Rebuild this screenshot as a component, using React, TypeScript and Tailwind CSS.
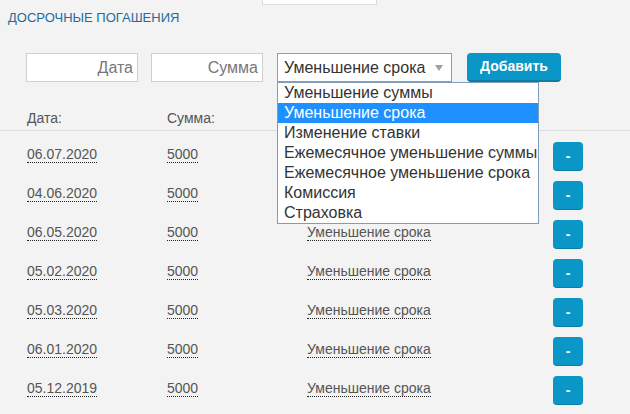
const rows = [
  { date: "06.07.2020", sum: "5000", type: "Уменьшение срока" },
  { date: "04.06.2020", sum: "5000", type: "Уменьшение срока" },
  { date: "06.05.2020", sum: "5000", type: "Уменьшение срока" },
  { date: "05.02.2020", sum: "5000", type: "Уменьшение срока" },
  { date: "05.03.2020", sum: "5000", type: "Уменьшение срока" },
  { date: "06.01.2020", sum: "5000", type: "Уменьшение срока" },
  { date: "05.12.2019", sum: "5000", type: "Уменьшение срока" },
];

const options = [
  "Уменьшение суммы",
  "Уменьшение срока",
  "Изменение ставки",
  "Ежемесячное уменьшение суммы",
  "Ежемесячное уменьшение срока",
  "Комиссия",
  "Страховка",
];

function Dotted({ children }: { children: React.ReactNode }) {
  return (
    <span className="inline-block leading-[16px] border-b border-dotted border-[#222]">
      {children}
    </span>
  );
}

export default function App() {
  return (
    <div className="h-[414px] w-[630px] overflow-hidden bg-[#f3f3f3] font-['Liberation_Sans',Arial,sans-serif] text-[#555]">
      {/* tail of the block above */}
      <div className="ml-[262px] h-[5px] w-[115px] border-x border-b border-[#dcdcdc] bg-white" />

      <div className="ml-[8px] mt-[5px] text-[13px] leading-[16px] text-[#1d6c9c]">
        ДОСРОЧНЫЕ ПОГАШЕНИЯ
      </div>

      {/* add form */}
      <div className="ml-[26px] mt-[27px] flex items-start">
        <input
          placeholder="Дата"
          className="h-[29px] w-[112px] border border-[#cfcfcf] bg-white pr-[4px] text-right text-[16px] placeholder:text-[#777] outline-none"
        />
        <input
          placeholder="Сумма"
          className="ml-[13px] h-[29px] w-[112px] border border-[#cfcfcf] bg-white pr-[4px] text-right text-[16px] placeholder:text-[#777] outline-none"
        />
        <div className="relative ml-[14px]">
          <div className="flex h-[29px] w-[175px] items-center justify-between border border-[#7f9ed3] bg-white pl-[6px] pr-[8px] text-[16px] text-[#333]">
            <span>Уменьшение срока</span>
            <span className="h-0 w-0 border-x-[4px] border-t-[6px] border-x-transparent border-t-[#a0a0a0]" />
          </div>
          <ul className="absolute left-0 top-[29px] z-10 w-[262px] border border-[#7f9db9] bg-white text-[16px] leading-[20px] text-[#333]">
            {options.map((o, i) => (
              <li
                key={o}
                className={
                  i === 1
                    ? "h-[20px] bg-[#1e90ff] pl-[6px] text-white"
                    : "h-[20px] pl-[6px]"
                }
              >
                {o}
              </li>
            ))}
          </ul>
        </div>
        <button className="ml-[15px] h-[29px] w-[94px] rounded-[4px] border-b-2 border-[#0b7ba8] bg-[#0b96c8] text-[14px] font-bold text-white">
          Добавить
        </button>
      </div>

      {/* table head */}
      <div className="mt-[26px] grid h-[23px] grid-cols-[140px_140px_246px_30px] border-b border-[#dedede] pl-[27px] text-[14px] leading-[20px]">
        <span>Дата:</span>
        <span>Сумма:</span>
        <span />
        <span />
      </div>

      {/* payments */}
      {rows.map((r, i) => (
        <div
          key={i}
          className="grid h-[39px] grid-cols-[140px_140px_246px_30px] items-start pl-[27px] pt-[11px] text-[14px]"
        >
          <div className="mt-[2px]">
            <Dotted>{r.date}</Dotted>
          </div>
          <div className="mt-[2px]">
            <Dotted>{r.sum}</Dotted>
          </div>
          <div className="mt-[2px]">
            <Dotted>{r.type}</Dotted>
          </div>
          <button className="flex h-[29px] w-[30px] items-center justify-center rounded-[4px] border-b border-[#0b7ba8] bg-[#0b96c8] text-[14px] font-bold leading-none text-white">
            -
          </button>
        </div>
      ))}
    </div>
  );
}
